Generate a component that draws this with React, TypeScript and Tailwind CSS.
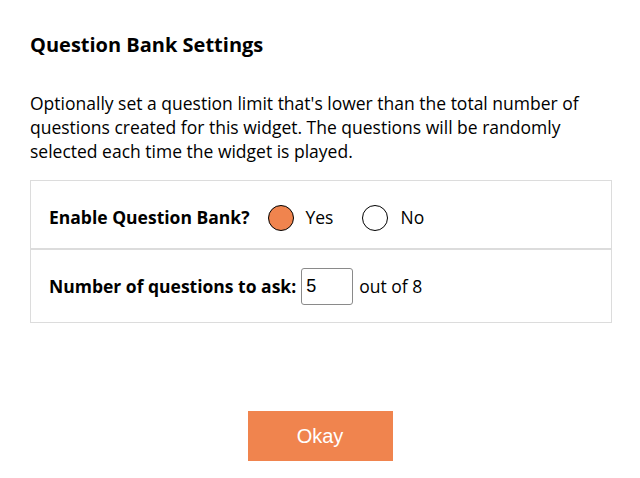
import React, { useState } from 'react';

const App: React.FC = () => {
    const [enabled, setEnabled] = useState(true);
    const [count, setCount] = useState('5');

    return (
        <div className="w-[640px] h-[478px] bg-white text-black font-['Open_Sans',sans-serif] overflow-hidden">
            <div className="px-[30px] pt-[32px]">
                <h1 className="text-[20px] leading-[26px] font-bold">Question Bank Settings</h1>
                <p className="mt-[33px] text-[17.5px] leading-[24px] w-[575px]">
                    Optionally set a question limit that's lower than the total number of questions created for this widget. The questions will be randomly selected each time the widget is played.
                </p>

                <div className="mt-[17px] w-[582px] border border-[#dcdcdc]">
                    <div className="h-[67px] flex items-center px-[18px] pt-[6px]">
                        <span className="text-[17.5px] font-bold">Enable Question Bank?</span>
                        <label className="flex items-center gap-[12px] cursor-pointer ml-[18px]" onClick={() => setEnabled(true)}>
                            <span className={`w-[26px] h-[26px] rounded-full border border-black ${enabled ? 'bg-[#f0844e]' : 'bg-white'}`} />
                            <span className="text-[17.5px]">Yes</span>
                        </label>
                        <label className="flex items-center gap-[12px] cursor-pointer ml-[29px]" onClick={() => setEnabled(false)}>
                            <span className={`w-[26px] h-[26px] rounded-full border border-black ${!enabled ? 'bg-[#f0844e]' : 'bg-white'}`} />
                            <span className="text-[17.5px]">No</span>
                        </label>
                    </div>
                    <div className="h-[74px] flex items-center px-[18px] border-t-2 border-[#dcdcdc]">
                        <span className="text-[17.5px] font-bold">Number of questions to ask:</span>
                        <input
                            value={count}
                            onChange={(e) => setCount(e.target.value)}
                            className="ml-[5px] w-[52px] h-[37px] border border-[#8a8a8a] rounded-[3px] px-[4px] text-[18px] font-['Liberation_Sans',Arial,sans-serif] outline-none"
                        />
                        <span className="ml-[6px] text-[17.5px]">out of 8</span>
                    </div>
                </div>
            </div>

            <div className="flex justify-center mt-[88px]">
                <button className="w-[145px] h-[50px] bg-[#f0844e] text-white text-[20px] font-['Liberation_Sans',Arial,sans-serif]">
                    Okay
                </button>
            </div>
        </div>
    );
};

export default App;
